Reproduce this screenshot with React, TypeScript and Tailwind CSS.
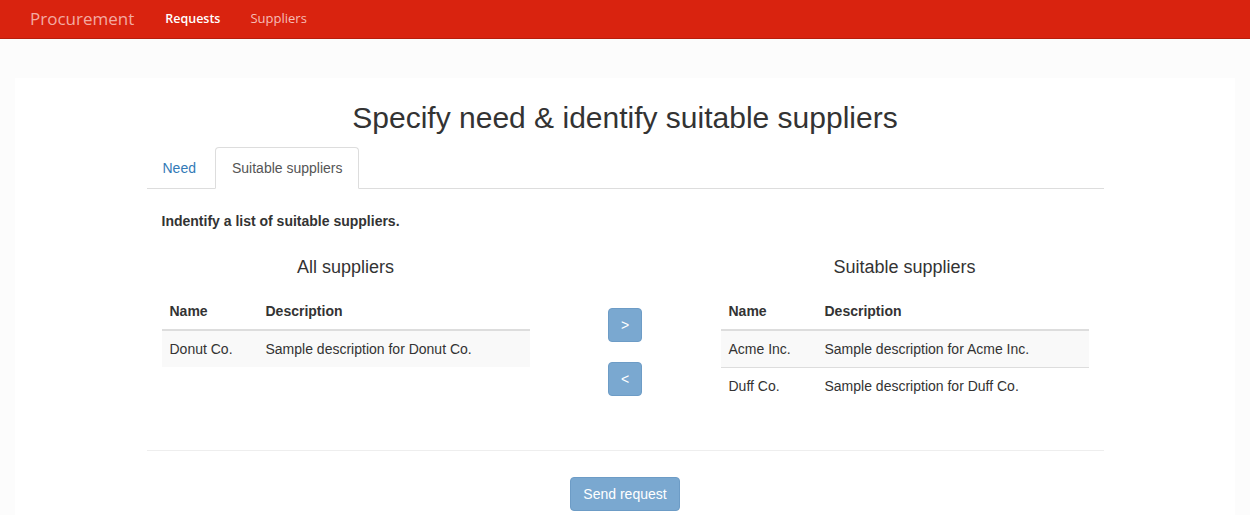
import { useState } from "react";

type Supplier = { name: string; description: string };

const allSuppliers: Supplier[] = [
  { name: "Donut Co.", description: "Sample description for Donut Co." },
];

const suitable: Supplier[] = [
  { name: "Acme Inc.", description: "Sample description for Acme Inc." },
  { name: "Duff Co.", description: "Sample description for Duff Co." },
];

function SupplierTable({ title, rows }: { title: string; rows: Supplier[] }) {
  return (
    <div className="w-[368px]">
      <h4 className="text-center text-[18px] leading-[20px] text-[#333]">{title}</h4>
      <table className="mt-[16px] w-full text-left text-[14px] leading-[20px] text-[#333]">
        <thead>
          <tr>
            <th className="w-[96px] border-b-2 border-[#ddd] px-2 py-2 font-bold">Name</th>
            <th className="border-b-2 border-[#ddd] px-2 py-2 font-bold">Description</th>
          </tr>
        </thead>
        <tbody>
          {rows.map((r, i) => (
            <tr key={r.name} className={i % 2 === 0 ? "bg-[#f9f9f9]" : ""}>
              <td className="border-t border-[#ddd] px-2 py-2">{r.name}</td>
              <td className="border-t border-[#ddd] px-2 py-2">{r.description}</td>
            </tr>
          ))}
        </tbody>
      </table>
    </div>
  );
}

export default function App() {
  const [tab, setTab] = useState("suppliers");

  return (
    <div className="min-h-[515px] bg-[#fcfcfc] font-['Liberation_Sans',Arial,sans-serif]">
      {/* Navbar */}
      <nav className="flex h-[39px] items-center border-b border-[#b81d0c] bg-[#d9230f] pl-[30px] font-['Open_Sans',sans-serif]">
        <span className="text-[17px] text-[#f3aaa2]">Procurement</span>
        <a className="ml-[31px] text-[12.5px] font-semibold text-white">Requests</a>
        <a className="ml-[30px] text-[13px] text-[#f6bdb6]">Suppliers</a>
      </nav>

      {/* Panel */}
      <div className="mx-[15px] mt-[39px] bg-white pt-[23px] pb-[10px]">
        <h2 className="text-center text-[30px] leading-[33px] text-[#333]">
          Specify need &amp; identify suitable suppliers
        </h2>

        <div className="mx-auto mt-[13px] w-[957px]">
          {/* Tabs */}
          <ul className="flex border-b border-[#ddd] text-[14px] leading-[20px]">
            <li className="-mb-px mr-[3px]">
              <a
                onClick={() => setTab("need")}
                className={`block cursor-pointer rounded-t-[4px] border px-[15px] py-[10px] ${
                  tab === "need" ? "border-[#ddd] border-b-white bg-white text-[#555]" : "border-transparent text-[#337ab7]"
                }`}
              >
                Need
              </a>
            </li>
            <li className="-mb-px">
              <a
                onClick={() => setTab("suppliers")}
                className={`block cursor-pointer rounded-t-[4px] border px-[16px] py-[10px] ${
                  tab === "suppliers" ? "border-[#ddd] border-b-white bg-white text-[#555]" : "border-transparent text-[#337ab7]"
                }`}
              >
                Suitable suppliers
              </a>
            </li>
          </ul>

          {/* Pane */}
          <div className="px-[15px] pt-[22px]">
            <p className="text-[14px] leading-[20px] font-bold text-[#333]">
              Indentify a list of suitable suppliers.
            </p>
            <div className="mt-[26px] flex justify-between">
              <SupplierTable title="All suppliers" rows={allSuppliers} />
              <div className="flex flex-1 flex-col items-center pt-[51px] gap-[20px]">
                <button className="h-[34px] w-[34px] rounded-[4px] border border-[#6d9cc6] bg-[#7aa8d0] text-[14px] text-white">
                  &gt;
                </button>
                <button className="h-[34px] w-[34px] rounded-[4px] border border-[#6d9cc6] bg-[#7aa8d0] text-[14px] text-white">
                  &lt;
                </button>
              </div>
              <SupplierTable title="Suitable suppliers" rows={suitable} />
            </div>
          </div>

          <hr className="mt-[46px] border-t border-[#eee]" />

          <div className="mt-[26px] flex justify-center">
            <button className="h-[34px] rounded-[4px] border border-[#6d9cc6] bg-[#7aa8d0] px-[12px] text-[14px] text-white">
              Send request
            </button>
          </div>
        </div>
      </div>
    </div>
  );
}
